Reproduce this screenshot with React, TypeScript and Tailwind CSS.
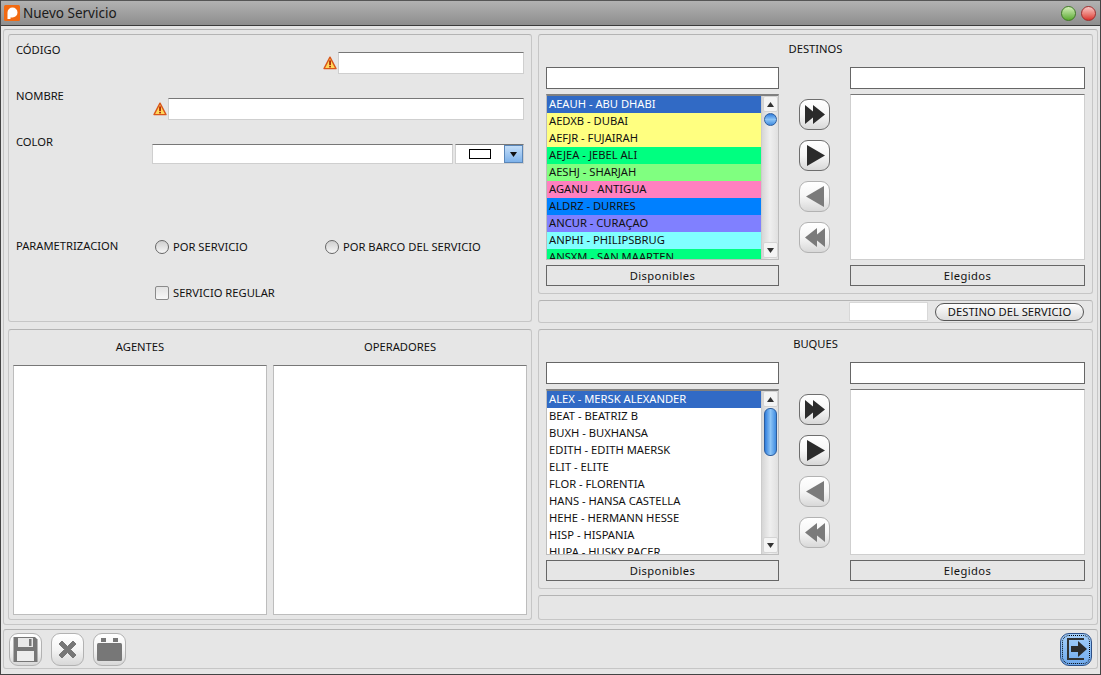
import React from 'react';

const destinos = [
  { name: 'AEAUH - ABU DHABI', color: 'bg-[#316ac5] text-white' },
  { name: 'AEDXB - DUBAI', color: 'bg-[#ffff80]' },
  { name: 'AEFJR - FUJAIRAH', color: 'bg-[#ffff80]' },
  { name: 'AEJEA - JEBEL ALI', color: 'bg-[#00ff80]' },
  { name: 'AESHJ - SHARJAH', color: 'bg-[#80ff80]' },
  { name: 'AGANU - ANTIGUA', color: 'bg-[#ff80c0]' },
  { name: 'ALDRZ - DURRES', color: 'bg-[#0080ff]' },
  { name: 'ANCUR - CURAÇAO', color: 'bg-[#8080ff]' },
  { name: 'ANPHI - PHILIPSBRUG', color: 'bg-[#80ffff]' },
  { name: 'ANSXM - SAN MAARTEN', color: 'bg-[#00ff80]' },
];

const buques = [
  { name: 'ALEX - MERSK ALEXANDER', color: 'bg-[#316ac5] text-white' },
  { name: 'BEAT - BEATRIZ B', color: 'bg-white' },
  { name: 'BUXH - BUXHANSA', color: 'bg-white' },
  { name: 'EDITH - EDITH MAERSK', color: 'bg-white' },
  { name: 'ELIT - ELITE', color: 'bg-white' },
  { name: 'FLOR - FLORENTIA', color: 'bg-white' },
  { name: 'HANS - HANSA CASTELLA', color: 'bg-white' },
  { name: 'HEHE - HERMANN HESSE', color: 'bg-white' },
  { name: 'HISP - HISPANIA', color: 'bg-white' },
  { name: 'HUPA - HUSKY PACER', color: 'bg-white' },
];

const panel = 'rounded-[3px] border border-[#c6c6c6] border-t-[#b4b4b4] bg-[#e6e6e6]';
const field = 'block bg-white border border-[#cfcfcf] border-t-[#777777] outline-none';

function Warning() {
  return (
    <svg width="14" height="14" viewBox="0 0 14 14" className="shrink-0">
      <path d="M7 1.2 L13 12.6 H1 Z" fill="#ffd75a" stroke="#d9561a" strokeWidth="1.4" strokeLinejoin="round" />
      <rect x="6.2" y="4.4" width="1.7" height="4.6" fill="#a81a00" />
      <rect x="6.2" y="9.8" width="1.7" height="1.6" fill="#a81a00" />
    </svg>
  );
}

function Radio({ label }: { label: string }) {
  return (
    <div className="flex w-[170px] items-center gap-[4px]">
      <span className="h-[14px] w-[14px] rounded-full border border-[#666666] bg-gradient-to-b from-[#cfcfcf] to-[#f6f6f6]" />
      <span>{label}</span>
    </div>
  );
}

function ScrollBar({ thumb }: { thumb: React.ReactNode }) {
  return (
    <div className="flex w-[17px] shrink-0 flex-col items-center border-l border-[#cccccc] bg-gradient-to-r from-[#d6d6d6] via-[#efefef] to-[#e0e0e0]">
      <div className="flex h-[16px] w-[15px] shrink-0 items-center justify-center rounded-[2px] border border-[#d4d4d4] bg-[#f4f4f4]">
        <svg width="7" height="5" viewBox="0 0 7 5"><path d="M3.5 0 L7 5 H0 Z" fill="#333333" /></svg>
      </div>
      {thumb}
      <div className="mt-auto mb-[1px] flex h-[16px] w-[15px] shrink-0 items-center justify-center rounded-[2px] border border-[#d4d4d4] bg-[#f4f4f4]">
        <svg width="7" height="5" viewBox="0 0 7 5"><path d="M3.5 5 L7 0 H0 Z" fill="#333333" /></svg>
      </div>
    </div>
  );
}

function ArrowButton({ kind, active }: { kind: 'all' | 'one' | 'back' | 'allback'; active: boolean }) {
  const fill = active ? '#2b2b2b' : '#7b7b7b';
  const paths = {
    all: 'M5 5 L13 11.5 V5 L25 14.5 L13 24 V17.5 L5 24 Z',
    one: 'M7 4 L25 14.5 L7 25 Z',
    back: 'M24 4 L6 14.5 L24 25 Z',
    allback: 'M25 5 L17 11.5 V5 L5 14.5 L17 24 V17.5 L25 24 Z',
  };
  return (
    <button
      className={
        'flex h-[31px] w-[31px] items-center justify-center rounded-[9px] border bg-gradient-to-b from-white via-[#f6f6f6] to-[#d8d8d8] ' +
        (active ? 'border-[#6e6e6e]' : 'border-[#b2b2b2]')
      }
    >
      <svg width="29" height="29" viewBox="0 0 29 29"><path d={paths[kind]} fill={fill} /></svg>
    </button>
  );
}

function Selector({ title, rows, thumb }: { title: string; rows: { name: string; color: string }[]; thumb: React.ReactNode }) {
  return (
    <div className={panel + ' h-[260px] px-[7px] pt-[7px]'}>
      <p className="h-[14px] text-center leading-[14px]">{title}</p>
      <div className="mt-[11px] flex">
        <div className="w-[233px]">
          <input readOnly className="block h-[22px] w-full border border-[#666666] bg-white outline-none" />
          <div className="mt-[5px] flex h-[166px] overflow-hidden border border-[#bdbdbd] border-t-2 border-t-[#808080] bg-white">
            <div className="min-w-0 flex-1">
              {rows.map((r) => (
                <div key={r.name} className={r.color + ' h-[17px] whitespace-nowrap pl-[2px] leading-[15px]'}>
                  {r.name}
                </div>
              ))}
            </div>
            <ScrollBar thumb={thumb} />
          </div>
          <button className="mt-[5px] block h-[21px] w-full border border-[#666666] bg-[#e6e6e6] pt-[2px] tracking-[0.4px]">Disponibles</button>
        </div>
        <div className="flex w-[71px] flex-col items-center gap-[10px] pt-[32px]">
          <ArrowButton kind="all" active />
          <ArrowButton kind="one" active />
          <ArrowButton kind="back" active={false} />
          <ArrowButton kind="allback" active={false} />
        </div>
        <div className="w-[235px]">
          <input readOnly className="block h-[22px] w-full border border-[#666666] bg-white outline-none" />
          <div className="mt-[5px] h-[166px] border border-[#cfcfcf] border-t-[#777777] bg-white" />
          <button className="mt-[5px] block h-[21px] w-full border border-[#666666] bg-[#e6e6e6] pt-[2px] tracking-[0.4px]">Elegidos</button>
        </div>
      </div>
    </div>
  );
}

function FooterButton({ children }: { children: React.ReactNode }) {
  return (
    <button className="flex h-[33px] w-[33px] items-center justify-center rounded-[9px] border border-[#b2b2b2] bg-gradient-to-b from-white via-[#f4f4f4] to-[#d8d8d8]">
      {children}
    </button>
  );
}

export default function App() {
  return (
    <div className="flex h-[675px] w-[1101px] flex-col overflow-hidden border-x border-b border-[#444444] bg-[#e6e6e6] font-['Noto_Sans',sans-serif] text-[11.2px] text-[#111111]">
      {/* title bar */}
      <div className="flex h-[26px] shrink-0 items-center border-t border-b border-t-[#555555] border-b-[#3c3c3c] bg-gradient-to-b from-[#b2b2b2] to-[#8e8e8e] pl-[3px] pr-[4px]">
        <svg width="16" height="16" viewBox="0 0 16 16" className="mr-[3px]">
          <rect width="16" height="16" rx="1.5" fill="#f26a12" />
          <path d="M3.5 14 V7.5 A5 5 0 1 1 8.5 12.5 H6.5 V14 Z" fill="#ffffff" />
        </svg>
        <span className="text-[13.5px] text-[#1a1a1a]">Nuevo Servicio</span>
        <span className="ml-auto h-[15px] w-[15px] rounded-full border border-[#3f7a25] bg-gradient-to-b from-[#d4f0b8] to-[#5aaa2c]" />
        <span className="ml-[5px] h-[15px] w-[15px] rounded-full border border-[#a12c2c] bg-gradient-to-b from-[#f6c6c6] to-[#d82c2c]" />
      </div>

      {/* body */}
      <div className="mx-[2px] mt-[3px] flex h-[596px] shrink-0 gap-[6px] rounded-[3px] border border-[#c6c6c6] border-t-[#b4b4b4] p-[4px] pb-0">
        <div className="flex w-[524px] flex-col gap-[7px]">
          <div className={panel + ' h-[288px] px-[7px] pt-[7px]'}>
            <div className="flex h-[32px] items-start justify-between">
              <span>CÓDIGO</span>
              <div className="flex items-center gap-[1px] self-end">
                <Warning />
                <input readOnly className={field + ' h-[22px] w-[186px]'} />
              </div>
            </div>
            <div className="mt-[14px] flex h-[32px] items-start justify-between">
              <span>NOMBRE</span>
              <div className="flex items-center gap-[1px] self-end">
                <Warning />
                <input readOnly className={field + ' h-[22px] w-[356px]'} />
              </div>
            </div>
            <div className="mt-[14px] flex h-[30px] items-start justify-between">
              <span>COLOR</span>
              <div className="flex items-center gap-[2px] self-end">
                <input readOnly className={field + ' h-[20px] w-[301px]'} />
                <div className="flex h-[20px] w-[69px] items-center border border-[#cfcfcf] border-t-[#777777] bg-white">
                  <div className="flex flex-1 justify-center">
                    <span className="h-[10px] w-[22px] border border-black bg-white" />
                  </div>
                  <div className="flex h-full w-[19px] items-center justify-center border border-[#5a86b8] bg-gradient-to-b from-[#c4def8] to-[#7eb2ea]">
                    <svg width="7" height="5" viewBox="0 0 7 5"><path d="M0 0 H7 L3.5 5 Z" fill="#111111" /></svg>
                  </div>
                </div>
              </div>
            </div>
            <div className="mt-[75px] flex h-[16px] items-center">
              <span className="mb-[2px] w-[139px]">PARAMETRIZACION</span>
              <Radio label="POR SERVICIO" />
              <Radio label="POR BARCO DEL SERVICIO" />
            </div>
            <div className="ml-[139px] mt-[30px] flex h-[16px] items-center gap-[4px]">
              <span className="h-[14px] w-[14px] rounded-[2px] border border-[#8a8a8a] bg-gradient-to-b from-[#e2e2e2] to-[#f8f8f8]" />
              <span className="pt-[1px]">SERVICIO REGULAR</span>
            </div>
          </div>

          <div className={panel + ' h-[291px] px-[4px]'}>
            <div className="flex gap-[6px]">
              <div className="w-[254px]">
                <p className="h-[35px] pt-[10px] text-center leading-[14px]">AGENTES</p>
                <div className="h-[250px] border border-[#bdbdbd] border-t-[#777777] bg-white" />
              </div>
              <div className="w-[254px]">
                <p className="h-[35px] pt-[10px] text-center leading-[14px]">OPERADORES</p>
                <div className="h-[250px] border border-[#bdbdbd] border-t-[#777777] bg-white" />
              </div>
            </div>
          </div>
        </div>

        <div className="flex w-[555px] flex-col gap-[6px]">
          <Selector
            title="DESTINOS"
            rows={destinos}
            thumb={<span className="mt-[1px] h-[13px] w-[13px] shrink-0 rounded-full border border-[#2c5d9e] bg-gradient-to-b from-[#2f7ddb] via-[#8cc4f6] to-[#3f8ce0]" />}
          />
          <div className={panel + ' flex h-[23px] items-center justify-end pr-[8px]'}>
            <input readOnly className="block h-[19px] w-[79px] border border-[#d8d8d8] bg-white outline-none" />
            <button className="ml-[7px] h-[18px] w-[149px] rounded-full border border-[#555555] bg-gradient-to-b from-white to-[#dcdcdc]">
              DESTINO DEL SERVICIO
            </button>
          </div>
          <Selector
            title="BUQUES"
            rows={buques}
            thumb={<span className="mt-[1px] h-[48px] w-[13px] shrink-0 rounded-[6px] border border-[#2c5d9e] bg-gradient-to-r from-[#2f7ddb] via-[#8cc4f6] to-[#3f8ce0]" />}
          />
          <div className={panel + ' h-[25px]'} />
        </div>
      </div>

      {/* footer */}
      <div className="mx-[2px] mt-[4px] flex h-[40px] shrink-0 items-center gap-[9px] rounded-[3px] border border-[#c6c6c6] border-t-[#b4b4b4] pl-[5px] pr-[5px]">
        <FooterButton>
          <svg width="27" height="27" viewBox="0 0 27 27">
            <path d="M1.5 1 H23 L25.5 3.5 V26 H1.5 Z" fill="#777777" />
            <rect x="6" y="2" width="15" height="9" fill="#e8e8e8" />
            <rect x="17" y="3" width="2.5" height="7" fill="#777777" />
            <rect x="5" y="15" width="17" height="10" fill="#ededed" />
          </svg>
        </FooterButton>
        <FooterButton>
          <svg width="27" height="27" viewBox="0 0 27 27">
            <path d="M5 8 L8 5 L13.5 10.5 L19 5 L22 8 L16.5 13.5 L22 19 L19 22 L13.5 16.5 L8 22 L5 19 L10.5 13.5 Z" fill="#777777" stroke="#777777" strokeLinejoin="round" />
          </svg>
        </FooterButton>
        <FooterButton>
          <svg width="27" height="27" viewBox="0 0 27 27">
            <rect x="1" y="7" width="25" height="18" rx="1.5" fill="#777777" />
            <rect x="5" y="2" width="5" height="4" fill="#777777" />
            <rect x="17" y="2" width="5" height="4" fill="#777777" />
          </svg>
        </FooterButton>
        <button className="ml-auto flex h-[33px] w-[32px] items-center justify-center rounded-[9px] border border-[#2c4f86] bg-gradient-to-b from-[#a6d0fa] to-[#6ea8ec] outline-dotted outline-1 -outline-offset-3 outline-black">
          <svg width="26" height="26" viewBox="0 0 26 26">
            <path d="M21 3 H5 V23 H21" fill="none" stroke="#333333" strokeWidth="2" />
            <path d="M8 10 H15 V5 L24 13 L15 21 V16 H8 Z" fill="#2b2b2b" />
          </svg>
        </button>
      </div>
    </div>
  );
}
